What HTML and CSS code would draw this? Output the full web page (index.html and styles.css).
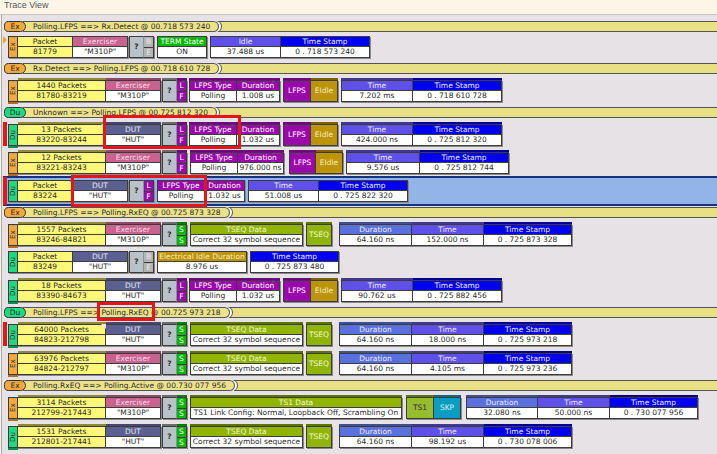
FILE: index.html
```html
<!DOCTYPE html>
<html lang="en">
<head>
    <meta charset="UTF-8">
    <title>Trace View</title>
    <link rel="stylesheet" href="styles.css">
</head>
<body>

<div class="title-bar">Trace View</div>

<div class="trace">

    <!-- Polling.LFPS to Rx.Detect -->
    <div class="trans first">
        <div class="dir ex">Ex</div>
        <div class="label">Polling.LFPS ==&gt; Rx.Detect @ 00.718 573 240</div>
        <div class="tail"></div>
    </div>
    <div class="row single">
        <div class="flag tri"></div>
        <div class="group">
            <div class="side ex">Ex</div>
            <div class="cell w55 yellow"><b>Packet</b><span>81779</span></div>
            <div class="cell w55 exerciser"><b>Exerciser</b><span>"M310P"</span></div>
        </div>
        <div class="group ml1">
            <div class="q">?</div>
            <div class="pair grey"><i>B</i><i>E</i></div>
        </div>
        <div class="group ml3">
            <div class="cell w50 green"><b>TERM State</b><span>ON</span></div>
        </div>
        <div class="group ml3">
            <div class="cell w71 time"><b>Idle</b><span>37.488 us</span></div>
            <div class="cell w89 stamp"><b>Time Stamp</b><span>0 . 718 573 240</span></div>
        </div>
    </div>

    <!-- Rx.Detect to Polling.LFPS -->
    <div class="trans">
        <div class="dir ex">Ex</div>
        <div class="label">Rx.Detect ==&gt; Polling.LFPS @ 00.718 610 728</div>
        <div class="tail"></div>
    </div>
    <div class="row multi">
        <div class="flag"></div>
        <div class="group">
            <div class="side ex">Ex</div>
            <div class="cell w88 yellow"><b>1440 Packets</b><span>81780-83219</span></div>
            <div class="cell w55 exerciser"><b>Exerciser</b><span>"M310P"</span></div>
        </div>
        <div class="group ml1">
            <div class="q">?</div>
            <div class="pair purple"><i>L</i><i>F</i></div>
        </div>
        <div class="group ml2">
            <div class="cell w48 purple"><b>LFPS Type</b><span>Polling</span></div>
            <div class="cell w43 purple"><b>Duration</b><span>1.008 us</span></div>
        </div>
        <div class="group ml3">
            <div class="tile w28 purple">LFPS</div>
            <div class="tile w27 gold">EIdle</div>
        </div>
        <div class="group ml3">
            <div class="cell w72 time"><b>Time</b><span>7.202 ms</span></div>
            <div class="cell w89 stamp"><b>Time Stamp</b><span>0 . 718 610 728</span></div>
        </div>
    </div>

    <!-- Unknown to Polling.LFPS -->
    <div class="trans">
        <div class="dir du">Du</div>
        <div class="label">Unknown ==&gt; Polling.LFPS @ 00.725 812 320</div>
        <div class="tail"></div>
    </div>
    <div class="row multi">
        <div class="flag red"></div>
        <div class="group">
            <div class="side du">Du</div>
            <div class="cell w88 yellow notch"><b>13 Packets</b><span>83220-83244</span></div>
            <div class="cell w55 dut"><b>DUT</b><span>"HUT"</span></div>
        </div>
        <div class="group ml1">
            <div class="q">?</div>
            <div class="pair purple"><i>L</i><i>F</i></div>
        </div>
        <div class="group ml2">
            <div class="cell w48 purple"><b>LFPS Type</b><span>Polling</span></div>
            <div class="cell w43 purple"><b>Duration</b><span>1.032 us</span></div>
        </div>
        <div class="group ml3">
            <div class="tile w28 purple">LFPS</div>
            <div class="tile w27 gold">EIdle</div>
        </div>
        <div class="group ml3">
            <div class="cell w72 time"><b>Time</b><span>424.000 ns</span></div>
            <div class="cell w89 stamp"><b>Time Stamp</b><span>0 . 725 812 320</span></div>
        </div>
    </div>
    <div class="row multi tight">
        <div class="flag"></div>
        <div class="group">
            <div class="side ex">Ex</div>
            <div class="cell w88 yellow"><b>12 Packets</b><span>83221-83243</span></div>
            <div class="cell w55 exerciser"><b>Exerciser</b><span>"M310P"</span></div>
        </div>
        <div class="group ml1">
            <div class="q">?</div>
            <div class="pair purple"><i>L</i><i>F</i></div>
        </div>
        <div class="group ml3">
            <div class="cell w48 purple"><b>LFPS Type</b><span>Polling</span></div>
            <div class="cell w46 purple"><b>Duration</b><span>976.000 ns</span></div>
        </div>
        <div class="group ml5">
            <div class="tile w27 purple">LFPS</div>
            <div class="tile w27 gold">EIdle</div>
        </div>
        <div class="group ml3">
            <div class="cell w74 time"><b>Time</b><span>9.576 us</span></div>
            <div class="cell w89 stamp"><b>Time Stamp</b><span>0 . 725 812 744</span></div>
        </div>
    </div>
    <div class="row selected">
        <div class="flag red"></div>
        <div class="group">
            <div class="side du">Du</div>
            <div class="cell w55 yellow notch"><b>Packet</b><span>83224</span></div>
            <div class="cell w55 dut"><b>DUT</b><span>"HUT"</span></div>
        </div>
        <div class="group ml1">
            <div class="q">?</div>
            <div class="pair purple"><i>L</i><i>F</i></div>
        </div>
        <div class="group ml3">
            <div class="cell w48 purple"><b>LFPS Type</b><span>Polling</span></div>
            <div class="cell w40 purple"><b>Duration</b><span>1.032 us</span></div>
        </div>
        <div class="group ml3">
            <div class="cell w71 time"><b>Time</b><span>51.008 us</span></div>
            <div class="cell w89 stamp"><b>Time Stamp</b><span>0 . 725 822 320</span></div>
        </div>
    </div>

    <!-- Polling.LFPS to Polling.RxEQ -->
    <div class="trans">
        <div class="dir ex">Ex</div>
        <div class="label">Polling.LFPS ==&gt; Polling.RxEQ @ 00.725 873 328</div>
        <div class="tail"></div>
    </div>
    <div class="row multi">
        <div class="flag"></div>
        <div class="group">
            <div class="side ex">Ex</div>
            <div class="cell w88 yellow"><b>1557 Packets</b><span>83246-84821</span></div>
            <div class="cell w55 exerciser"><b>Exerciser</b><span>"M310P"</span></div>
        </div>
        <div class="group ml1">
            <div class="q">?</div>
            <div class="pair green"><i>S</i><i>S</i></div>
        </div>
        <div class="group ml3">
            <div class="cell w113 olive"><b>TSEQ Data</b><span>Correct 32 symbol sequence</span></div>
        </div>
        <div class="group ml3">
            <div class="tile w26 olive">TSEQ</div>
        </div>
        <div class="group ml7">
            <div class="cell w73 duration"><b>Duration</b><span>64.160 ns</span></div>
            <div class="cell w72 time"><b>Time</b><span>152.000 ns</span></div>
            <div class="cell w88 stamp"><b>Time Stamp</b><span>0 . 725 873 328</span></div>
        </div>
    </div>
    <div class="row single">
        <div class="flag"></div>
        <div class="group">
            <div class="side du">Du</div>
            <div class="cell w55 yellow"><b>Packet</b><span>83249</span></div>
            <div class="cell w55 dut"><b>DUT</b><span>"HUT"</span></div>
        </div>
        <div class="group ml1">
            <div class="q">?</div>
            <div class="pair grey"><i>B</i><i>E</i></div>
        </div>
        <div class="group ml3">
            <div class="cell w90 gold"><b>Electrical Idle Duration</b><span>8.976 us</span></div>
        </div>
        <div class="group ml3">
            <div class="cell w89 stamp"><b>Time Stamp</b><span>0 . 725 873 480</span></div>
        </div>
    </div>
    <div class="row multi">
        <div class="flag"></div>
        <div class="group">
            <div class="side du">Du</div>
            <div class="cell w88 yellow"><b>18 Packets</b><span>83390-84673</span></div>
            <div class="cell w55 dut"><b>DUT</b><span>"HUT"</span></div>
        </div>
        <div class="group ml1">
            <div class="q">?</div>
            <div class="pair purple"><i>L</i><i>F</i></div>
        </div>
        <div class="group ml2">
            <div class="cell w48 purple"><b>LFPS Type</b><span>Polling</span></div>
            <div class="cell w43 purple"><b>Duration</b><span>1.032 us</span></div>
        </div>
        <div class="group ml3">
            <div class="tile w28 purple">LFPS</div>
            <div class="tile w27 gold">EIdle</div>
        </div>
        <div class="group ml3">
            <div class="cell w72 time"><b>Time</b><span>90.762 us</span></div>
            <div class="cell w89 stamp"><b>Time Stamp</b><span>0 . 725 882 456</span></div>
        </div>
    </div>

    <!-- Polling.LFPS to Polling.RxEQ, other side -->
    <div class="trans">
        <div class="dir du">Du</div>
        <div class="label">Polling.LFPS ==&gt; Polling.RxEQ @ 00.725 973 218</div>
        <div class="tail"></div>
    </div>
    <div class="row multi">
        <div class="flag red"></div>
        <div class="group">
            <div class="side du">Du</div>
            <div class="cell w88 yellow notch"><b>64000 Packets</b><span>84823-212798</span></div>
            <div class="cell w55 dut"><b>DUT</b><span>"HUT"</span></div>
        </div>
        <div class="group ml1">
            <div class="q">?</div>
            <div class="pair green"><i>S</i><i>S</i></div>
        </div>
        <div class="group ml3">
            <div class="cell w113 olive"><b>TSEQ Data</b><span>Correct 32 symbol sequence</span></div>
        </div>
        <div class="group ml3">
            <div class="tile w26 olive">TSEQ</div>
        </div>
        <div class="group ml7">
            <div class="cell w73 duration"><b>Duration</b><span>64.160 ns</span></div>
            <div class="cell w72 time"><b>Time</b><span>18.000 ns</span></div>
            <div class="cell w88 stamp"><b>Time Stamp</b><span>0 . 725 973 218</span></div>
        </div>
    </div>
    <div class="row multi">
        <div class="flag"></div>
        <div class="group">
            <div class="side ex">Ex</div>
            <div class="cell w88 yellow"><b>63976 Packets</b><span>84824-212797</span></div>
            <div class="cell w55 exerciser"><b>Exerciser</b><span>"M310P"</span></div>
        </div>
        <div class="group ml1">
            <div class="q">?</div>
            <div class="pair green"><i>S</i><i>S</i></div>
        </div>
        <div class="group ml3">
            <div class="cell w113 olive"><b>TSEQ Data</b><span>Correct 32 symbol sequence</span></div>
        </div>
        <div class="group ml3">
            <div class="tile w26 olive">TSEQ</div>
        </div>
        <div class="group ml7">
            <div class="cell w73 duration"><b>Duration</b><span>64.160 ns</span></div>
            <div class="cell w72 time"><b>Time</b><span>4.105 ms</span></div>
            <div class="cell w88 stamp"><b>Time Stamp</b><span>0 . 725 973 236</span></div>
        </div>
    </div>

    <!-- Polling.RxEQ to Polling.Active -->
    <div class="trans">
        <div class="dir ex">Ex</div>
        <div class="label">Polling.RxEQ ==&gt; Polling.Active @ 00.730 077 956</div>
        <div class="tail"></div>
    </div>
    <div class="row multi">
        <div class="flag"></div>
        <div class="group">
            <div class="side ex">Ex</div>
            <div class="cell w88 yellow"><b>3114 Packets</b><span>212799-217443</span></div>
            <div class="cell w55 exerciser"><b>Exerciser</b><span>"M310P"</span></div>
        </div>
        <div class="group ml1">
            <div class="q">?</div>
            <div class="pair green"><i>S</i><i>S</i></div>
        </div>
        <div class="group ml3">
            <div class="cell w212 olive"><b>TS1 Data</b><span>TS1 Link Config: Normal, Loopback Off, Scrambling On</span></div>
        </div>
        <div class="group ml4">
            <div class="tile w28 olive-light">TS1</div>
            <div class="tile w27 teal">SKP</div>
        </div>
        <div class="group ml5">
            <div class="cell w72 duration"><b>Duration</b><span>32.080 ns</span></div>
            <div class="cell w72 time"><b>Time</b><span>50.000 ns</span></div>
            <div class="cell w88 stamp"><b>Time Stamp</b><span>0 . 730 077 956</span></div>
        </div>
    </div>
    <div class="row multi">
        <div class="flag"></div>
        <div class="group">
            <div class="side du">Du</div>
            <div class="cell w88 yellow"><b>1531 Packets</b><span>212801-217441</span></div>
            <div class="cell w55 dut"><b>DUT</b><span>"HUT"</span></div>
        </div>
        <div class="group ml1">
            <div class="q">?</div>
            <div class="pair green"><i>S</i><i>S</i></div>
        </div>
        <div class="group ml3">
            <div class="cell w113 olive"><b>TSEQ Data</b><span>Correct 32 symbol sequence</span></div>
        </div>
        <div class="group ml3">
            <div class="tile w26 olive">TSEQ</div>
        </div>
        <div class="group ml7">
            <div class="cell w73 duration"><b>Duration</b><span>64.160 ns</span></div>
            <div class="cell w72 time"><b>Time</b><span>98.192 us</span></div>
            <div class="cell w88 stamp"><b>Time Stamp</b><span>0 . 730 078 006</span></div>
        </div>
    </div>

    <!-- red annotation boxes drawn over the trace -->
    <div class="callout callout-type"></div>
    <div class="callout callout-selected"></div>
    <div class="callout callout-rxeq"></div>
</div>

</body>
</html>
```

FILE: styles.css
```css
html, body {
    margin: 0;
    padding: 0;
    height: 454px;
    overflow: hidden;
    background-color: #fdf5e6;
}
body {
    font-family: "DejaVu Sans", sans-serif;
    font-size: 7.5px;
    color: #2b2b2b;
}
.title-bar {
    height: 14px;
    padding-left: 4px;
    font-family: "Liberation Sans", sans-serif;
    font-size: 9px;
    line-height: 10px;
    color: #555;
    border-bottom: 1px solid #c8c4c0;
}
.trace {
    position: relative;
    height: 439px;
    padding: 6px 0 0 1px;
    box-sizing: border-box;
    margin-left: 1px;
    border-left: 1px solid #a8a8a8;
    background-color: #e6e2e6;
    overflow: hidden;
}

/* state transition bars */
.trans {
    display: flex;
    height: 11px;
    margin-top: 5px;
    margin-left: 1px;
    line-height: 9px;
}
.trans.first {
    margin-top: 0;
}
.dir {
    position: relative;
    z-index: 2;
    width: 22px;
    box-sizing: border-box;
    text-align: center;
    border: 1px solid #333;
    border-radius: 5px 6px 6px 5px;
}
.dir.ex { background-color: #f5a83c; }
.dir.du { background-color: #1fd882; }
.label {
    position: relative;
    z-index: 1;
    margin-left: -3px;
    padding: 0 8px 0 10px;
    background-color: #ece389;
    border: 1px solid #555;
    border-left: none;
    border-radius: 0 6px 6px 0;
    box-shadow: 2px 0 0 #fff, 3px 0 0 #555;
    white-space: nowrap;
}
.tail {
    flex: 1;
    margin-left: -6px;
    background-color: #e8e084;
    border-top: 1px solid #555;
    border-bottom: 1px solid #555;
}

/* packet rows */
.row {
    display: flex;
    align-items: flex-end;
    margin-top: 5px;
}
.row.single {
    height: 22px;
}
.row.multi {
    height: 24px;
}
.row.tight {
    margin-top: 4px;
}
.trans + .row {
    margin-top: 4px;
}
.row.selected {
    height: 30px;
    margin-top: 2px;
    align-items: center;
    box-sizing: border-box;
    background-color: #92b4e6;
    border-top: 2px solid #16337e;
    border-bottom: 2px solid #16337e;
}
.selected + .trans {
    margin-top: 1px;
}

.flag {
    flex: none;
    align-self: stretch;
    width: 4px;
    margin-right: 1px;
}
.flag.red {
    background-color: #e8141c;
}
.flag.tri {
    width: 0;
    height: 0;
    margin-right: 1px;
    align-self: flex-start;
    border-top: 4px solid transparent;
    border-bottom: 4px solid transparent;
    border-left: 4px solid #f0a83c;
    box-sizing: content-box;
}
.selected .flag {
    margin: -1px 1px -1px 0;
}

.group {
    display: flex;
    flex: none;
    height: 22px;
    box-shadow: 1px 1px 0 #8a8a8a;
}
.ml1 { margin-left: 1px; }
.ml2 { margin-left: 2px; }
.ml3 { margin-left: 3px; }
.ml4 { margin-left: 4px; }
.ml5 { margin-left: 5px; }
.ml7 { margin-left: 7px; }

.w26 { width: 26px; }
.w27 { width: 27px; }
.w28 { width: 28px; }
.w40 { width: 40px; }
.w43 { width: 43px; }
.w46 { width: 46px; }
.w48 { width: 48px; }
.w50 { width: 50px; }
.w55 { width: 55px; }
.w71 { width: 71px; }
.w72 { width: 72px; }
.w73 { width: 73px; }
.w74 { width: 74px; }
.w88 { width: 88px; }
.w89 { width: 89px; }
.w90 { width: 90px; }
.w113 { width: 113px; }
.w212 { width: 212px; }

/* colours for each kind of field */
.yellow { --head: #fdf878; --strip: #8f8a3c; --head-text: #2b2b2b; }
.exerciser { --head: #c9628f; --strip: #8c4a68; --head-text: #f4dde8; }
.dut { --head: #5c6090; --strip: #454868; --head-text: #e2e4f4; }
.purple { --head: #9a08ac; --strip: #6a0a78; --head-text: #fff; }
.green { --head: #00b800; --strip: #007c00; --head-text: #fff; }
.grey { --head: #b4b4b4; --strip: #808080; --head-text: #e8e8e8; }
.time { --head: #6050ea; --strip: #403a8c; --head-text: #eceaff; }
.stamp { --head: #0000f0; --strip: #00008c; --head-text: #eef; }
.duration { --head: #5a70dc; --strip: #40508c; --head-text: #eef; }
.olive { --head: #90b400; --strip: #5c7400; --head-text: #f4f8dc; }
.olive-light { --head: #98bc30; --strip: #5c7400; --head-text: #2b2b2b; }
.gold { --head: #bd9406; --strip: #7c6204; --head-text: #f6ecc4; }
.teal { --head: #0c9cc0; --strip: #086880; --head-text: #d8f4fc; }

.cell {
    display: flex;
    flex: none;
    flex-direction: column;
    position: relative;
    box-sizing: border-box;
    border: solid #3c3c3c;
    border-width: 1px 1px 1px 0;
    line-height: 9px;
    text-align: center;
    white-space: nowrap;
    overflow: hidden;
}
.group > :first-child {
    border-left-width: 1px;
}
.cell b {
    height: 10px;
    font-weight: normal;
    color: var(--head-text);
    background-color: var(--head);
    border-bottom: 1px solid #3c3c3c;
    box-sizing: border-box;
}
.cell span {
    height: 10px;
    line-height: 10px;
    background-color: #fff;
}
.cell.yellow span {
    background-color: #fdf878;
}
.multi .cell, .multi .side, .multi .q, .multi .pair, .multi .tile {
    box-shadow: 0 -2px 0 var(--strip, #6c6c6c);
}
.multi .cell {
    overflow: visible;
}
.notch::after {
    content: "";
    position: absolute;
    top: -1px;
    right: -1px;
    border-top: 5px solid #e6e2e6;
    border-left: 5px solid transparent;
}
.selected .notch::after {
    border-top-color: #92b4e6;
}

.side {
    flex: none;
    width: 10px;
    box-sizing: border-box;
    border: 1px solid #3c3c3c;
    writing-mode: vertical-rl;
    transform: rotate(180deg);
    text-align: center;
    line-height: 8px;
    font-size: 7px;
}
.side.ex { background-color: #f5a83c; --strip: #a8702c; }
.side.du { background-color: #1fd882; --strip: #128a52; }

.q {
    flex: none;
    width: 15px;
    box-sizing: border-box;
    border: 1px solid #3c3c3c;
    line-height: 20px;
    text-align: center;
    font-weight: bold;
    background-color: #b8c2c8;
    border-right-color: #8a9298;
}
.pair {
    display: flex;
    flex: none;
    flex-direction: column;
    width: 10px;
    box-sizing: border-box;
    border: solid #3c3c3c;
    border-width: 1px 1px 1px 0;
}
.pair i {
    height: 10px;
    font-style: normal;
    line-height: 9px;
    text-align: center;
    color: var(--head-text);
    background-color: var(--head);
}
.pair i + i {
    border-top: 1px solid #3c3c3c;
}

.tile {
    flex: none;
    box-sizing: border-box;
    border: solid #3c3c3c;
    border-width: 1px 1px 1px 0;
    line-height: 20px;
    text-align: center;
    color: var(--head-text);
    background-color: var(--head);
}

/* annotations */
.callout {
    position: absolute;
    z-index: 3;
    box-sizing: border-box;
    border: 3px solid #e8141c;
}
.callout-type {
    left: 101px;
    top: 100px;
    width: 138px;
    height: 34px;
}
.callout-selected {
    left: 69px;
    top: 160px;
    width: 136px;
    height: 32px;
}
.callout-rxeq {
    left: 95px;
    top: 287px;
    width: 58px;
    height: 19px;
}
```
